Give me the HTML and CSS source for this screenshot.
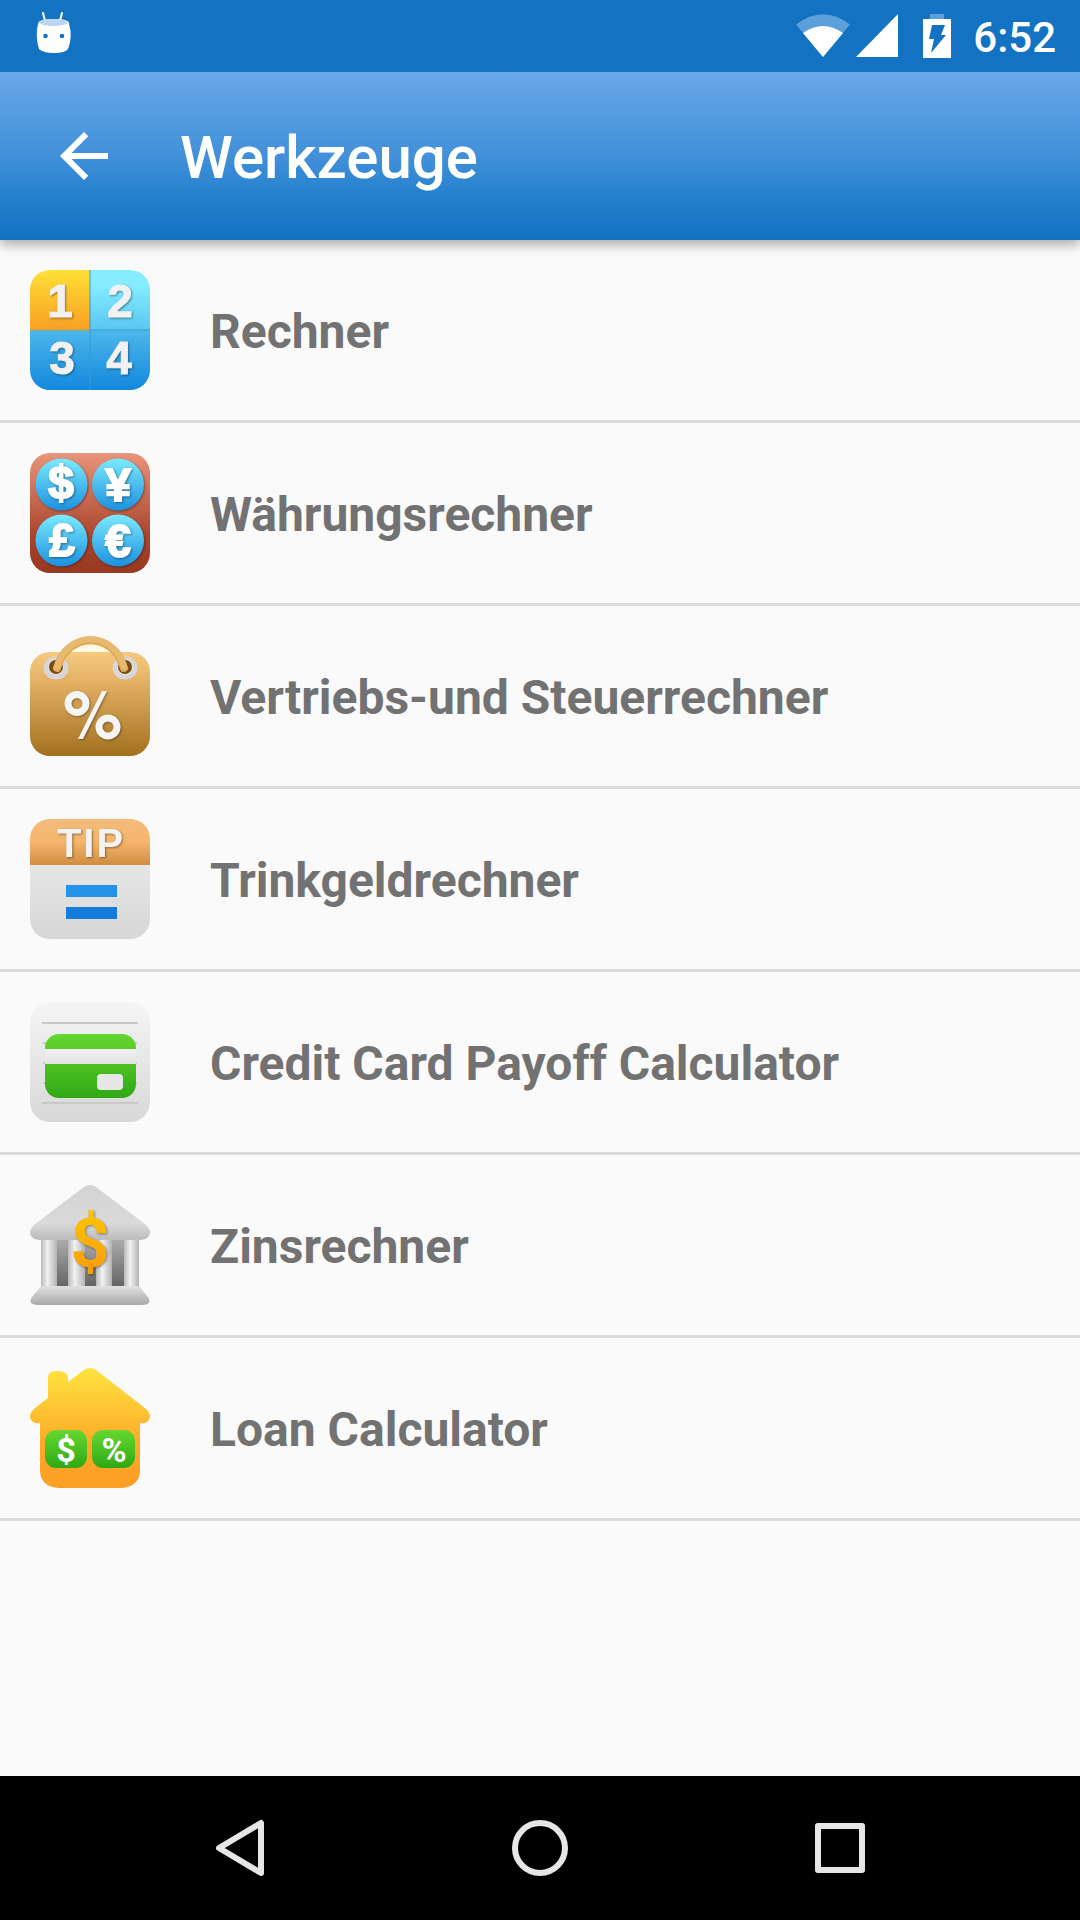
FILE: index.html
```html
<!DOCTYPE html>
<html lang="de">
<head>
<meta charset="utf-8">
<meta name="viewport" content="width=device-width, initial-scale=1">
<title>Werkzeuge</title>
<link rel="stylesheet" href="styles.css">
</head>
<body>
<div class="screen">
  <div class="status-bar">
    <svg class="status-app" viewBox="0 0 48 48" aria-hidden="true">
      <path d="M13 5l2 8M32 5l-2 8" stroke="#fff" stroke-width="2" stroke-linecap="round"/>
      <path d="M8 16Q8 11 24 11T39 16Q43 28 38 41Q35 45 24 45T9 41Q5 28 8 16z" fill="#fff"/>
      <ellipse cx="23.500" cy="14.500" rx="14" ry="3.500" fill="#bcd6f1"/>
      <circle cx="15.500" cy="28" r="2.300" fill="#1472c3"/><circle cx="32" cy="28" r="2.300" fill="#1472c3"/>
    </svg>
    <svg class="status-wifi" viewBox="0 0 54 48" aria-hidden="true">
      <path d="M0 12.500Q27-8 54 12.500L27 45z" fill="#5d9fd8"/>
      <path d="M7 21Q27 7 47 21L27 45z" fill="#fff"/>
    </svg>
    <svg class="status-signal" viewBox="0 0 42 48" aria-hidden="true"><path d="M42 2v43H0z" fill="#fff"/></svg>
    <svg class="status-battery" viewBox="0 0 28 48" aria-hidden="true">
      <path d="M7 2h14v5H7z" fill="#5d9fd8"/><path d="M0 7h28v39H0z" fill="#fff"/>
      <path d="M9 13h13l-4 10h5L8 41l3-14H6z" fill="#1472c3"/>
    </svg>
    <time class="clock">6:52</time>
  </div>

  <header class="app-bar">
    <button class="back" type="button" aria-label="Zurück">
      <svg viewBox="0 0 24 24"><path d="M20 11H7.830l5.590-5.590L12 4l-8 8 8 8 1.410-1.410L7.830 13H20z" fill="#fff"/></svg>
    </button>
    <h1 class="title">Werkzeuge</h1>
  </header>

  <main class="content">
    <ul class="tools">
      <li><a class="tool" href="#rechner">
        <svg class="tool-icon" viewBox="0 0 120 120" aria-hidden="true">
          <defs>
            <clipPath id="tile"><rect width="120" height="120" rx="20"/></clipPath>
            <linearGradient id="yellow" x2="0" y2="1"><stop stop-color="#ffe037"/><stop offset="1" stop-color="#f99f24"/></linearGradient>
            <linearGradient id="cyan" x2="0" y2="1"><stop offset=".25" stop-color="#85edff"/><stop offset="1" stop-color="#5ac6f1"/></linearGradient>
            <linearGradient id="blue" x2="0" y2="1"><stop stop-color="#4db7ec"/><stop offset="1" stop-color="#1388dc"/></linearGradient>
            <linearGradient id="coin" x2="0" y2="1"><stop stop-color="#7ceaff"/><stop offset="1" stop-color="#1b91e0"/></linearGradient>
          </defs>
          <g clip-path="url(#tile)">
            <path d="M0 0h60v60H0z" fill="url(#yellow)"/><path d="M60 0h60v60H60z" fill="url(#cyan)"/>
            <path d="M0 60h120v60H0z" fill="url(#blue)"/>
            <path d="M0 60h60" stroke="#b5a04c" stroke-width="1"/><path d="M60 60h60M60 0v120" stroke="#3b9bcc" stroke-width="1"/>
          </g>
          <g class="digits"><text x="30" y="47">1</text><text x="90" y="47">2</text><text x="32" y="104">3</text><text x="89" y="104">4</text></g>
        </svg>
        <span class="tool-name">Rechner</span></a></li>
      <li><a class="tool" href="#waehrung">
        <svg class="tool-icon" viewBox="0 0 120 120" aria-hidden="true">
          <defs><linearGradient id="red" x2="0" y2="1"><stop stop-color="#e8957b"/><stop offset=".7" stop-color="#a9442c"/><stop offset="1" stop-color="#963821"/></linearGradient></defs>
          <rect width="120" height="120" rx="20" fill="url(#red)"/>
          <g fill="url(#coin)" class="coins"><circle cx="31.500" cy="31.500" r="26"/><circle cx="88" cy="31.500" r="26"/><circle cx="31.500" cy="87.500" r="26"/><circle cx="88" cy="87.500" r="26"/></g>
          <g class="digits currency"><text x="31" y="46">$</text><text x="88" y="48">¥</text><text x="32" y="103">£</text><text x="88" y="104">€</text></g>
        </svg>
        <span class="tool-name">Währungsrechner</span></a></li>
      <li><a class="tool" href="#steuer">
        <svg class="tool-icon" viewBox="0 0 120 120" aria-hidden="true">
          <defs><linearGradient id="tan" x2="0" y2="1"><stop stop-color="#f6c981"/><stop offset=".3" stop-color="#e2b063"/><stop offset="1" stop-color="#a2701e"/></linearGradient></defs>
          <rect y="16" width="120" height="104" rx="20" fill="url(#tan)"/>
          <path d="M38 16Q60-2 82 16z" fill="#fff8e5"/>
          <g stroke="#d7d7d7" stroke-width="5" fill="#f2f2f2"><ellipse cx="26" cy="32" rx="10" ry="9"/><ellipse cx="95" cy="32" rx="10" ry="9"/></g>
          <circle cx="26" cy="31" r="7" fill="#7a4b12"/><circle cx="95" cy="31" r="7" fill="#7a4b12"/>
          <path d="M27 32C38-5 83-5 94 32" fill="none" stroke="#dfa953" stroke-width="8" stroke-linecap="round"/>
          <path d="M27 31C38-6 83-6 94 31" fill="none" stroke="#e8ba70" stroke-width="6" stroke-linecap="round"/>
          <g class="raised" fill="none" stroke="#f5f5f5" stroke-width="7"><circle cx="47" cy="67.500" r="9"/><circle cx="78" cy="91" r="9"/></g>
          <path class="raised" d="M72 55h5L53 103h-5z" fill="#f5f5f5"/>
        </svg>
        <span class="tool-name">Vertriebs-und Steuerrechner</span></a></li>
      <li><a class="tool" href="#trinkgeld">
        <svg class="tool-icon" viewBox="0 0 120 120" aria-hidden="true">
          <defs><linearGradient id="orange" x2="0" y2="1"><stop stop-color="#f4bb7b"/><stop offset=".5" stop-color="#f4b66c"/><stop offset="1" stop-color="#d28c42"/></linearGradient>
          <linearGradient id="silver" x2="0" y2="1"><stop stop-color="#efefef"/><stop offset="1" stop-color="#d7d7d7"/></linearGradient></defs>
          <rect width="120" height="120" rx="20" fill="url(#silver)"/>
          <g clip-path="url(#tile)"><path d="M0 0h120v46H0z" fill="url(#orange)"/></g>
          <text class="tip" x="61" y="38">TIP</text>
          <path d="M36 66h51v12H36z" fill="#2691e8"/><path d="M36 88h51v12H36z" fill="#157cdb"/>
        </svg>
        <span class="tool-name">Trinkgeldrechner</span></a></li>
      <li><a class="tool" href="#kreditkarte">
        <svg class="tool-icon" viewBox="0 0 120 120" aria-hidden="true">
          <defs><linearGradient id="paper" x2="0" y2="1"><stop stop-color="#f5f5f5"/><stop offset="1" stop-color="#d8d8d8"/></linearGradient>
          <linearGradient id="stripe" x2="0" y2="1"><stop stop-color="#f2f2f2"/><stop offset="1" stop-color="#e2e2e2"/></linearGradient>
          <linearGradient id="green" x2="0" y2="1"><stop stop-color="#65d632"/><stop offset=".3" stop-color="#55ca28"/><stop offset="1" stop-color="#2fa815"/></linearGradient></defs>
          <rect width="120" height="120" rx="20" fill="url(#paper)"/>
          <path d="M12 21h96M12 101h96" stroke="#c8c8c8" stroke-width="2"/><path d="M13 41h94M13 61h94M13 81h94" stroke="#c9c9c9" stroke-width="2"/>
          <rect x="15" y="32" width="91" height="64" rx="14" fill="url(#green)"/>
          <path d="M15 47h91v15H15z" fill="url(#stripe)"/><rect x="67" y="72" width="26" height="16" rx="4" fill="#e7e7e7"/>
        </svg>
        <span class="tool-name">Credit Card Payoff Calculator</span></a></li>
      <li><a class="tool" href="#zins">
        <svg class="tool-icon" viewBox="0 0 120 120" aria-hidden="true">
          <defs><linearGradient id="pillar"><stop stop-color="#b9b9b9"/><stop offset=".4" stop-color="#f2f2f2"/><stop offset="1" stop-color="#b2b2b2"/></linearGradient>
          <linearGradient id="roof" x2="0" y2="1"><stop stop-color="#d3d3d3"/><stop offset=".7" stop-color="#dadada"/><stop offset="1" stop-color="#bbb"/></linearGradient>
          <linearGradient id="base" x2="0" y2="1"><stop stop-color="#e1e1e1"/><stop offset="1" stop-color="#a9a9a9"/></linearGradient>
          <linearGradient id="gap" x2="0" y2="1"><stop stop-color="#aaa"/><stop offset="1" stop-color="#656565"/></linearGradient>
          <linearGradient id="gold" x2="0" y2="1"><stop stop-color="#fcc900"/><stop offset="1" stop-color="#fa950d"/></linearGradient></defs>
          <path d="M12 55h96v46H12z" fill="url(#gap)"/>
          <g fill="url(#pillar)"><path d="M11 55h16v46H11z"/><path d="M38 55h17v46H38z"/><path d="M66 55h16v46H66z"/><path d="M94 55h15v46H94z"/></g>
          <path d="M54 2Q60-2 66 2L115 39Q124 47 117 53Q114 55 108 55H12Q6 55 3 53Q-4 47 5 39z" fill="url(#roof)"/>
          <path d="M11 101h98l9 11q5 8-7 8H9q-12 0-7-8z" fill="url(#base)"/>
          <text class="gold-dollar" x="60" y="82">$</text>
        </svg>
        <span class="tool-name">Zinsrechner</span></a></li>
      <li><a class="tool" href="#darlehen">
        <svg class="tool-icon" viewBox="0 0 120 120" aria-hidden="true">
          <defs><linearGradient id="house" x2="0" y2="1"><stop stop-color="#ffe33f"/><stop offset=".65" stop-color="#fda928"/><stop offset="1" stop-color="#fb9e25"/></linearGradient></defs>
          <path d="M18 8Q19 3 27 3T38 8V14L54 2Q60-2 66 2L115 40Q124 48 117 54Q114 56 110 55V103Q109 119 91 120H29Q11 119 10 103V55Q6 56 3 54Q-4 48 5 40L18 30z" fill="url(#house)"/>
          <rect x="15" y="62" width="42" height="38" rx="11" fill="url(#green)"/><rect x="62" y="62" width="43" height="38" rx="11" fill="url(#green)"/>
          <g class="house-signs"><text x="36" y="94">$</text><text x="84" y="94">%</text></g>
        </svg>
        <span class="tool-name">Loan Calculator</span></a></li>
    </ul>
  </main>

  <nav class="nav-bar" aria-label="System">
    <button type="button" aria-label="Zurück"><svg viewBox="0 0 60 60"><path d="M51 5v50L9 30z"/></svg></button>
    <button type="button" aria-label="Startseite"><svg viewBox="0 0 60 60"><circle cx="30" cy="30" r="25"/></svg></button>
    <button type="button" aria-label="Übersicht"><svg viewBox="0 0 60 60"><rect x="8" y="8" width="44" height="44"/></svg></button>
  </nav>
</div>
</body>
</html>
```
FILE: styles.css
```css
* { box-sizing: border-box; }

body {
  margin: 0;
  background: #fafafa;
  font-family: Roboto, "Liberation Sans", sans-serif;
}

svg { display: block; flex: none; }

button {
  border: 0;
  padding: 0;
  background: none;
}

.screen {
  display: flex;
  flex-direction: column;
  min-height: 100vh;
}

.status-bar {
  position: relative;
  z-index: 2;
  display: flex;
  align-items: center;
  height: 72px;
  padding: 0 24px 0 30px;
  background: #1472c3;
  color: #fff;
}

.status-app { width: 48px; height: 48px; margin-bottom: 8px; }
.status-wifi { width: 54px; height: 48px; margin-left: auto; }
.status-signal { width: 42px; height: 48px; margin-left: 6px; }
.status-battery { width: 28px; height: 48px; margin-left: 25px; }

.clock {
  margin-left: 22px;
  padding-top: 4px;
  font-size: 42px;
  font-weight: 500;
  line-height: 48px;
}

.app-bar {
  position: relative;
  z-index: 1;
  display: flex;
  align-items: center;
  gap: 60px;
  height: 168px;
  padding: 0 48px;
  background: linear-gradient(#68a8e8, #4290d9 50%, #2380cd 75%, #1472c3);
  box-shadow: 0 4px 12px rgba(0, 0, 0, .35);
  color: #fff;
}

.back svg { width: 72px; height: 72px; }

.title {
  margin: 0;
  padding-top: 4px;
  font-size: 60px;
  font-weight: 500;
  line-height: 72px;
}

.content { flex: 1; }

.tools {
  margin: 0;
  padding: 0;
  list-style: none;
}

.tool {
  display: flex;
  align-items: center;
  gap: 60px;
  padding: 30px;
  border-bottom: 3px solid #dadada;
  color: #727272;
  font-size: 48px;
  font-weight: 700;
  line-height: 56px;
  text-decoration: none;
}

.tool-icon { width: 120px; height: 120px; }

.tool-name { padding-top: 4px; }

.digits {
  fill: #f1f1f1;
  stroke: #f1f1f1;
  stroke-width: 1px;
  font: 700 46px "Liberation Sans", sans-serif;
  text-anchor: middle;
  filter: drop-shadow(1px 1px 1px rgba(0, 0, 0, .4));
}

.currency {
  fill: #fff;
  stroke: #fff;
  stroke-width: 2px;
}

.coins, .raised { filter: drop-shadow(1px 1px 1px rgba(0, 0, 0, .35)); }

.tip {
  fill: #f3f3f3;
  font: 700 40px "Liberation Sans", sans-serif;
  letter-spacing: 2px;
  text-anchor: middle;
  filter: drop-shadow(1px 1px 1px rgba(0, 0, 0, .4));
}

.gold-dollar {
  fill: url(#gold);
  font: 700 68px Roboto, sans-serif;
  text-anchor: middle;
  filter: drop-shadow(1px 1px 1px rgba(0, 0, 0, .4));
}

.house-signs {
  fill: #fff;
  font: 700 34px Roboto, sans-serif;
  text-anchor: middle;
}

.nav-bar {
  display: grid;
  grid-template-columns: repeat(3, 1fr);
  height: 144px;
  padding: 0 90px;
  background: #000;
}

.nav-bar button {
  display: grid;
  place-items: center;
}

.nav-bar svg {
  width: 60px;
  height: 60px;
  fill: none;
  stroke: #e6e6e6;
  stroke-width: 6px;
  stroke-linejoin: round;
}
```
